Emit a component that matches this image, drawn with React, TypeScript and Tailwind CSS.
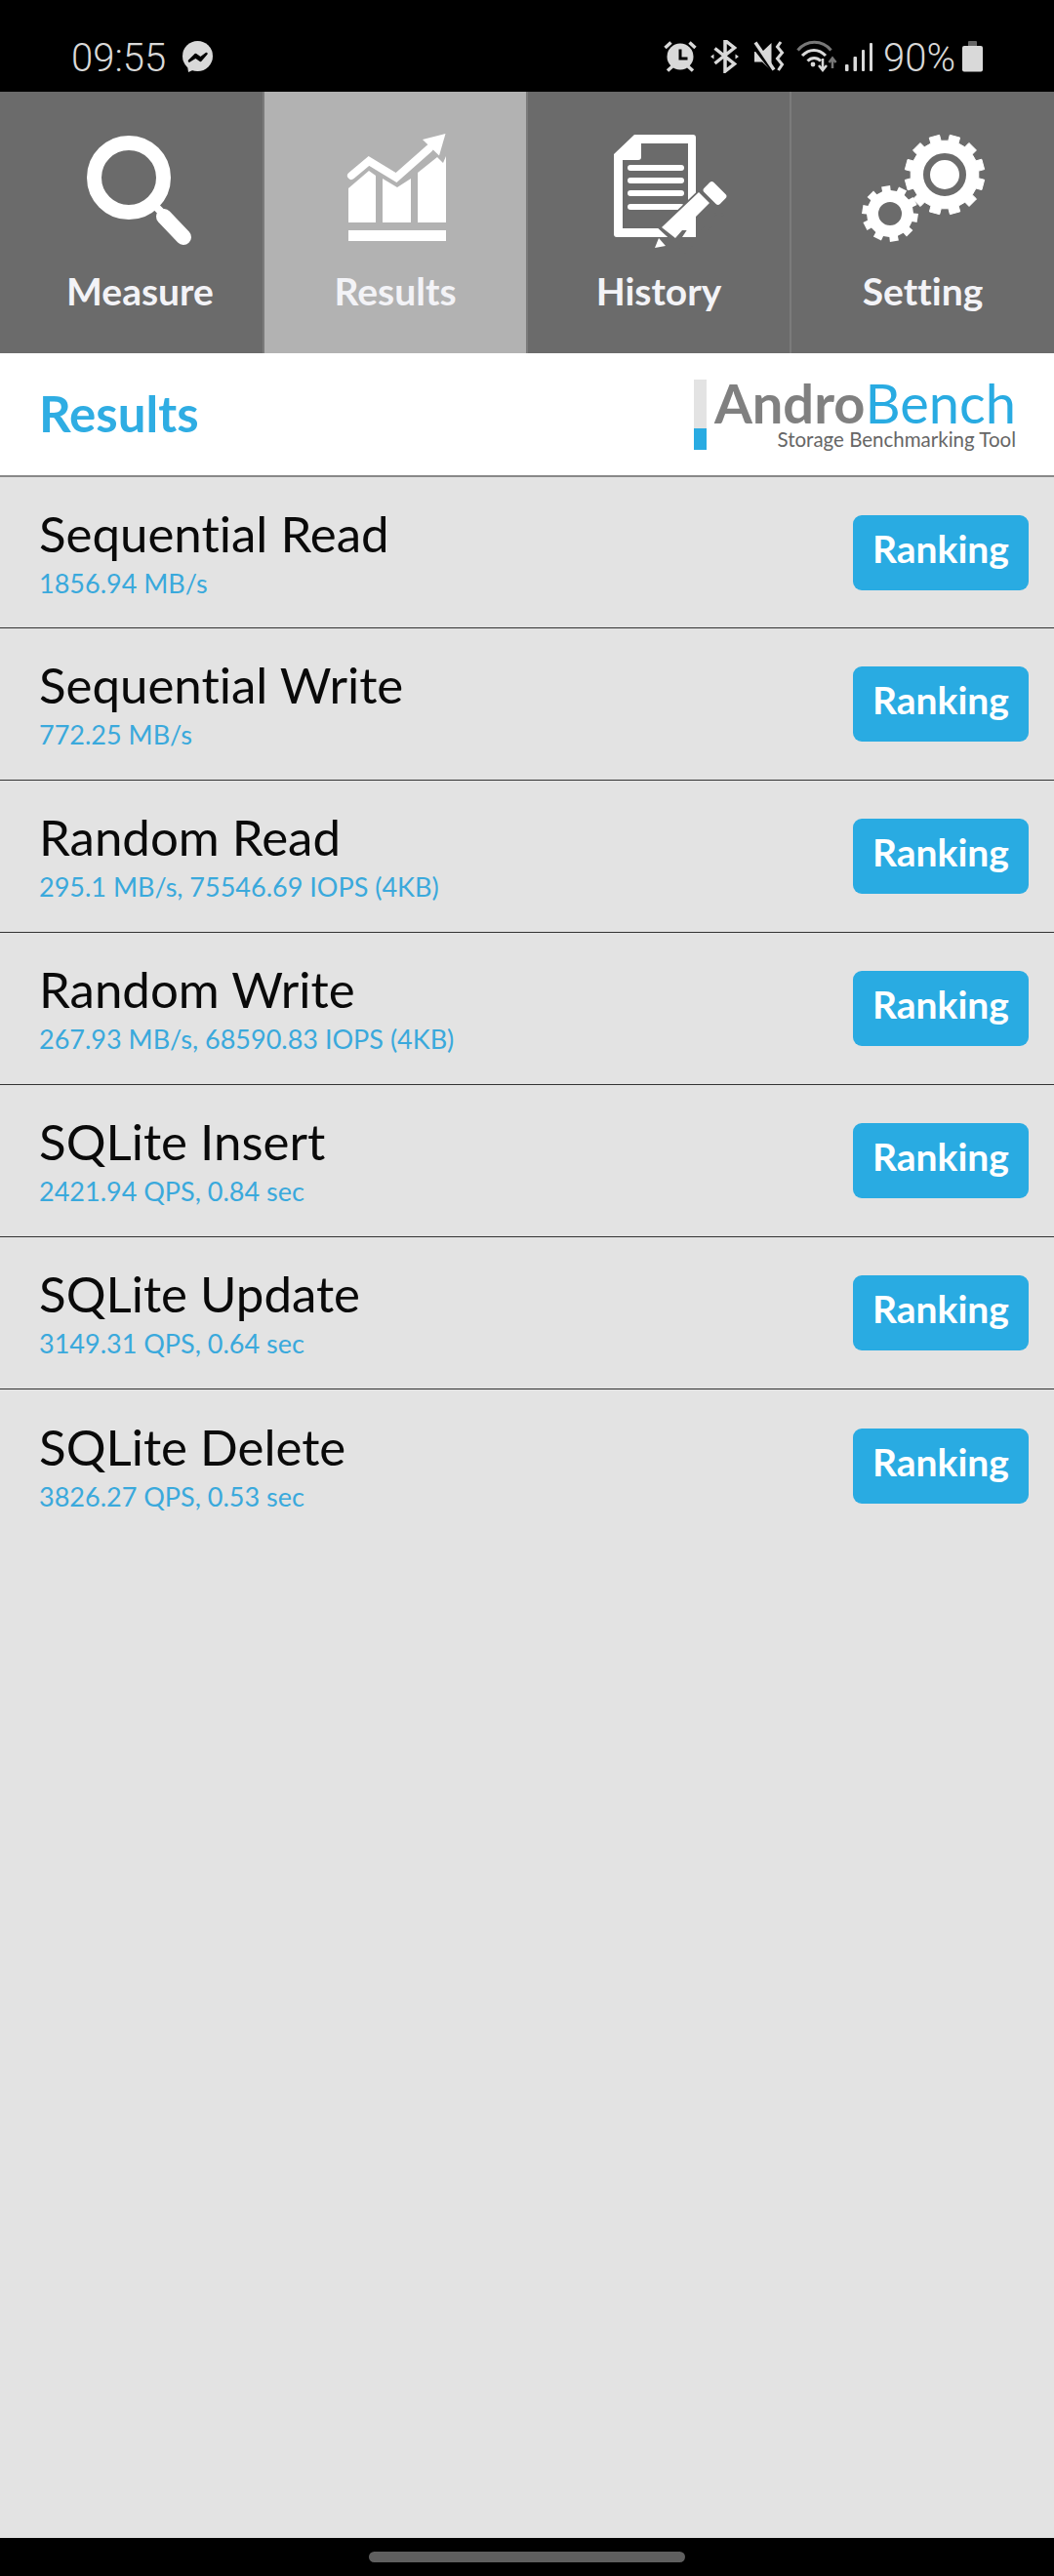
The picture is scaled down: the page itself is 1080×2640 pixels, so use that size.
import React from "react";

const sans = "font-['Lato','Liberation_Sans',sans-serif] [font-variant-ligatures:none]";

function gearPath(cx: number, cy: number, ro: number, ri: number, teeth: number, rot = 0) {
  const pts: string[] = [];
  const step = (Math.PI * 2) / teeth;
  for (let i = 0; i < teeth; i++) {
    const a = rot + i * step;
    const seq: [number, number][] = [
      [ri, a - step * 0.29],
      [ro, a - step * 0.25],
      [ro, a + step * 0.25],
      [ri, a + step * 0.29],
    ];
    for (const [r, t] of seq) pts.push(`${(cx + r * Math.cos(t)).toFixed(2)},${(cy + r * Math.sin(t)).toFixed(2)}`);
  }
  return "M" + pts.join("L") + "Z";
}

const C = "#d9d9d9";

function Messenger() {
  return (
    <svg width="32" height="33" viewBox="186 43 32 33" className="mb-[4px] ml-[17px] block">
      <circle cx="201.500" cy="58.500" r="15.500" fill={C} />
      <path d="M191 68l1 7 6.500-3z" fill={C} />
      <path d="M193 63.500l6.500-6.500 5 3.500 6-4.500-6 7-5-3.500z" fill="#000" stroke="#000" strokeWidth="2.500" strokeLinejoin="round" />
    </svg>
  );
}

function StatusIcons() {
  return (
    <svg width="216" height="34" viewBox="680 41 216 34" className="mb-[4px] block">
      <circle cx="698" cy="58" r="13.500" fill={C} />
      <path d="M698 50.500v9.500h7.500" fill="none" stroke="#000" strokeWidth="3" />
      <path d="M682.500 49l6-5.500M713.500 49l-6-5.500M685 72.500l5-4.500M711 72.500l-5-4.500" stroke={C} strokeWidth="3.500" />
      <path d="M733.500 49.500l20 16-9.500 7.500V41.500l9.500 7.500-20 16" fill="none" stroke={C} strokeWidth="3.500" />
      <path d="M729 58l3.500-2.500v5zM758 58l-3.500-2.500v5z" fill={C} />
      <path d="M774 53h8l9.500-9v28.500l-9.500-9h-8z" fill={C} />
      <path d="M773 47l22 28" stroke="#000" strokeWidth="4" />
      <path d="M775 43.500l19 28" stroke={C} strokeWidth="3.500" />
      <path d="M801 43l-3.500 5 5 6-5 6 5 6-4 6" fill="none" stroke={C} strokeWidth="3" />
      <path d="M818.500 51.500c9-11 25-11 34 0" fill="none" stroke="#777" strokeWidth="3" />
      <path d="M823 57c7-7.500 17-7.500 24 0" fill="none" stroke={C} strokeWidth="3" />
      <path d="M828.500 62.500c4-4 9.500-4 13.500 0" fill="none" stroke={C} strokeWidth="3" />
      <circle cx="834" cy="66" r="2.400" fill={C} />
      <path d="M844 60v10M840 67l4 5 4-5" fill="none" stroke={C} strokeWidth="2.500" />
      <path d="M854 70V61M850.500 64l3.500-4.500 3.500 4.500" fill="none" stroke="#777" strokeWidth="2.500" />
      <rect x="867" y="66" width="3.500" height="7" rx="1" fill={C} />
      <rect x="875.500" y="58" width="3.500" height="15" rx="1" fill={C} />
      <rect x="884" y="51" width="3" height="22" rx="1" fill={C} />
      <rect x="892" y="44" width="3" height="29" rx="1" fill={C} />
    </svg>
  );
}

function Battery() {
  return (
    <svg width="21" height="32" viewBox="986 42 21 32" className="mb-[4px] ml-[7px] block">
      <rect x="992" y="42" width="9" height="6" rx="1" fill="#666" />
      <rect x="986" y="47" width="21" height="26.500" rx="2" fill={C} />
    </svg>
  );
}

function MeasureIcon() {
  return (
    <svg viewBox="0 94 269 176" className="block h-[176px] w-full">
      <circle cx="132" cy="182" r="35.500" fill="none" stroke="#fff" strokeWidth="15" />
      <path d="M160 212l6 6" stroke="#fff" strokeWidth="8" />
      <path d="M168 222l20 21" stroke="#fff" strokeWidth="16" strokeLinecap="round" />
    </svg>
  );
}

function ResultsIcon() {
  return (
    <svg viewBox="271 94 268 176" className="block h-[176px] w-full">
      <path d="M357 193l21-18 7 5v48h-28z" fill="#fff" />
      <path d="M392 183l15 9 14-9v45h-29z" fill="#fff" />
      <path d="M428 177l20-16 6 6 3-7v68h-29z" fill="#fff" />
      <rect x="357" y="236" width="100" height="11" fill="#fff" />
      <path d="M360 180l18-15 28 17 34-30" fill="none" stroke="#fff" strokeWidth="8" strokeLinecap="round" strokeLinejoin="miter" />
      <path d="M456.500 137l-23.500 6 17 16.500z" fill="#fff" />
    </svg>
  );
}

function HistoryIcon() {
  return (
    <svg viewBox="541 94 268 176" className="block h-[176px] w-full">
      <path
        fillRule="evenodd"
        d="M650 138h60a3 3 0 0 1 3 3v99a3 3 0 0 1-3 3h-78a3 3 0 0 1-3-3v-82zM657 147v14a3 3 0 0 1-3 3h-16v70h67V147z"
        fill="#fff"
      />
      <g fill="#fff">
        <rect x="643" y="169" width="58" height="6" rx="3" />
        <rect x="643" y="182" width="58" height="6" rx="3" />
        <rect x="643" y="195" width="58" height="6" rx="3" />
        <rect x="643" y="209" width="58" height="6" rx="3" />
      </g>
      <path d="M678 234l38-36 22 22-36 36z" fill="#6b6b6b" stroke="#6b6b6b" strokeWidth="5" />
      <path d="M678 233l38-36 11 11 -14 14v14h-14l-7 8z" fill="#fff" />
      <path d="M713 243v-21l-14 21z" fill="#fff" />
      <path d="M671 254l4-10 7 8z" fill="#fff" />
      <rect x="721" y="191" width="23" height="14" rx="3" transform="rotate(45 732.500 198)" fill="#fff" />
    </svg>
  );
}

function SettingIcon() {
  return (
    <svg viewBox="811 94 269 176" className="block h-[176px] w-full">
      <path d={gearPath(968, 179, 41, 35, 12, 0.26)} fill="#fff" strokeLinejoin="round" stroke="#fff" strokeWidth="1" />
      <circle cx="968" cy="179" r="18.500" fill="none" stroke="#6b6b6b" strokeWidth="7" />
      <path fillRule="evenodd" d={gearPath(912, 219, 29, 24, 10, 0.16) + "M924 219a12 12 0 1 0-24 0a12 12 0 1 0 24 0z"} fill="#fff" />
    </svg>
  );
}

function Tab({ label, icon, active, cls }: { label: string; icon: React.ReactNode; active?: boolean; cls?: string }) {
  return (
    <div className={`flex h-[268px] flex-col border-r-2 border-[#7b7b7b] last:border-r-0 ${active ? "bg-[#b2b2b2]" : "bg-[#6b6b6b]"}`}>
      {icon}
      <div className={`mt-[3px] text-center text-[39px] leading-[50px] font-bold text-[#f3f3f7] ${sans} ${cls ?? ""}`}>{label}</div>
    </div>
  );
}

const rows: [string, string][] = [
  ["Sequential Read", "1856.94 MB/s"],
  ["Sequential Write", "772.25 MB/s"],
  ["Random Read", "295.1 MB/s, 75546.69 IOPS (4KB)"],
  ["Random Write", "267.93 MB/s, 68590.83 IOPS (4KB)"],
  ["SQLite Insert", "2421.94 QPS, 0.84 sec"],
  ["SQLite Update", "3149.31 QPS, 0.64 sec"],
  ["SQLite Delete", "3826.27 QPS, 0.53 sec"],
];

function Row({ title, sub, first, last }: { title: string; sub: string; first: boolean; last: boolean }) {
  return (
    <div className={`flex items-center justify-between pr-[26px] pl-10 ${first ? "h-[155px]" : "h-[156px]"} ${last ? "" : "border-b border-[#333333]"}`}>
      <div className={`${sans} flex flex-col`}>
        <div className="text-[51px] leading-[58px] text-[#0a0a0a]">{title}</div>
        <div className="mt-[5px] text-[27px] leading-[34px] text-[#3aa9dc]">{sub}</div>
      </div>
      <div className={`${sans} flex h-[77px] w-[180px] items-center justify-center rounded-[9px] bg-[#29abe2] pb-[8px] text-[39px] font-bold text-white`}>Ranking</div>
    </div>
  );
}

export default function App() {
  return (
    <div className="flex h-[2640px] w-[1080px] flex-col overflow-hidden bg-[#e3e3e3]">
      <div className="flex h-[94px] items-center justify-between bg-black pt-[26px] pr-[73px] pl-[73px] text-[40px] leading-[48px] font-light text-[#d9d9d9]">
        <div className="flex items-center font-['Roboto',sans-serif]">
          09:55
          <Messenger />
        </div>
        <div className="flex items-center font-['Roboto',sans-serif]">
          <StatusIcons />
          <span className="ml-[10px]">90%</span>
          <Battery />
        </div>
      </div>
      <div className="grid grid-cols-[271px_270px_270px_269px]">
        <Tab label="Measure" icon={<MeasureIcon />} cls="pl-[18px]" />
        <Tab label="Results" icon={<ResultsIcon />} active />
        <Tab label="History" icon={<HistoryIcon />} />
        <Tab label="Setting" icon={<SettingIcon />} />
      </div>
      <div className="flex h-[127px] items-center justify-between border-b-2 border-[#888888] bg-white pr-[39px] pl-10">
        <div className={`${sans} text-[51px] font-bold text-[#2fade3]`}>Results</div>
        <div className="flex items-start">
          <div className="mt-[1px] flex h-[72px] w-[13px] flex-col bg-[#e3e3e3]">
            <div className="mt-auto h-[22px] bg-[#29abe2]" />
          </div>
          <div className={`${sans} ml-[8px] flex flex-col items-end`}>
            <div className="text-[56px] leading-[50px]">
              <span className="inline-block font-bold text-[#808080]">Andro</span>
              <span className="inline-block text-[#29abe2]">Bench</span>
            </div>
            <div className="text-[20.5px] leading-[24px] text-[#666666]">Storage Benchmarking Tool</div>
          </div>
        </div>
      </div>
      <div className="flex flex-1 flex-col">
        {rows.map(([t, s], i) => (
          <Row key={t} title={t} sub={s} first={i === 0} last={i === rows.length - 1} />
        ))}
      </div>
      <div className="flex h-[39px] items-center justify-center bg-black">
        <div className="h-[11px] w-[324px] rounded-full bg-[#5f5f5f]" />
      </div>
    </div>
  );
}
